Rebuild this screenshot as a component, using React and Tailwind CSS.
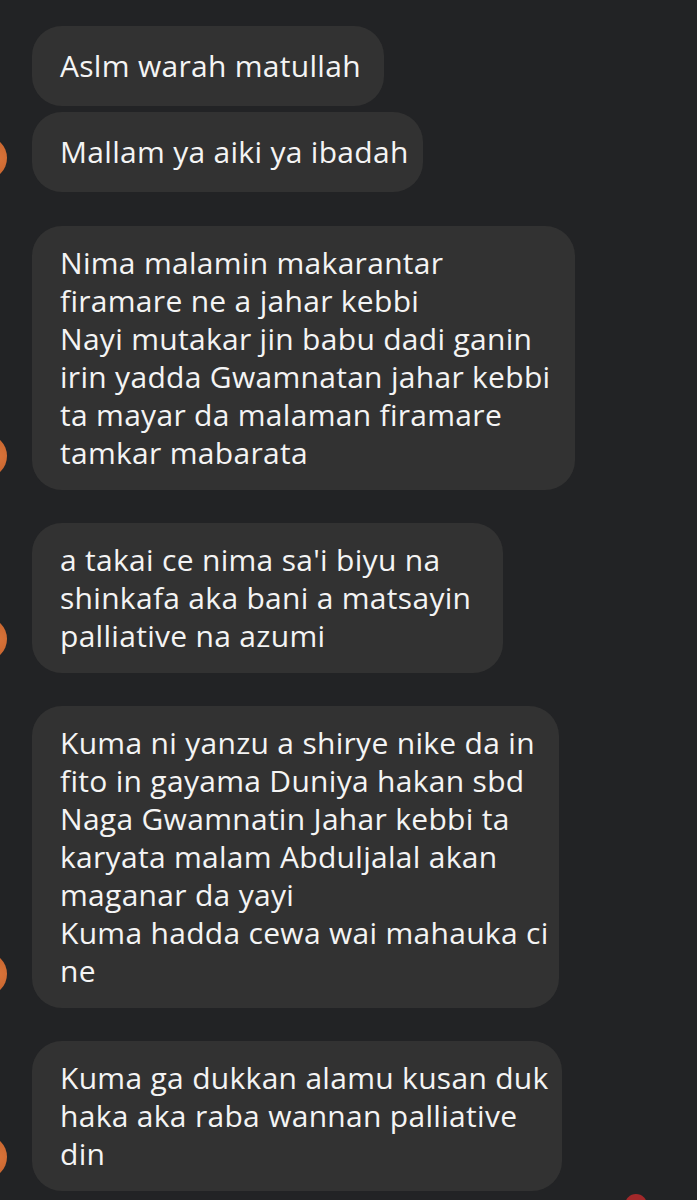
import React from "react";

const messages = [
  { lines: ["Aslm warah matullah"], w: "w-[352px]", single: true, avatar: false, mt: "mt-0" },
  { lines: ["Mallam ya aiki ya ibadah"], w: "w-[391px]", single: true, avatar: true, mt: "mt-[6px]" },
  {
    lines: [
      "Nima malamin makarantar",
      "firamare ne a jahar kebbi",
      "Nayi mutakar jin babu dadi ganin",
      "irin yadda Gwamnatan jahar kebbi",
      "ta mayar da malaman firamare",
      "tamkar mabarata",
    ],
    w: "w-[543px]",
    avatar: true,
    mt: "mt-[34px]",
  },
  {
    lines: ["a takai ce nima sa'i biyu na", "shinkafa aka bani a matsayin", "palliative na azumi"],
    w: "w-[471px]",
    avatar: true,
    mt: "mt-[33px]",
  },
  {
    lines: [
      "Kuma ni yanzu a shirye nike da in",
      "fito in gayama Duniya hakan sbd",
      "Naga Gwamnatin Jahar kebbi ta",
      "karyata malam Abduljalal akan",
      "maganar da yayi",
      "Kuma hadda cewa wai mahauka ci",
      "ne",
    ],
    w: "w-[527px]",
    avatar: true,
    mt: "mt-[33px]",
  },
  {
    lines: ["Kuma ga dukkan alamu kusan duk", "haka aka raba wannan palliative", "din"],
    w: "w-[530px]",
    avatar: true,
    mt: "mt-[33px]",
  },
];

function Avatar({ show }) {
  return (
    <div
      className={
        "shrink-0 w-[44px] h-[44px] ml-[-37px] mr-[25px] mb-[12px] rounded-full " +
        (show ? "bg-[radial-gradient(circle_at_80%_50%,#d9743a,#b4521f)]" : "bg-transparent")
      }
    />
  );
}

export default function App() {
  return (
    <div
      className="w-[697px] h-[1200px] overflow-hidden bg-[#222325] pt-[26px] text-[#f4f4f4]"
      style={{ fontFamily: '"Open Sans", "Noto Sans", sans-serif' }}
    >
      {messages.map((m, i) => (
        <div key={i} className={"flex items-end " + m.mt}>
          <Avatar show={m.avatar} />
          <div
            className={
              "bg-[#323232] rounded-[30px] pl-[28px] pr-[16px] text-[30px] tracking-[0.3px] leading-[38px] whitespace-nowrap " +
              m.w +
              (m.single ? " py-[21px]" : " py-[18px]")
            }
          >
            {m.lines.map((l, j) => (
              <div key={j}>{l}</div>
            ))}
          </div>
        </div>
      ))}
      <div className="flex justify-end pr-[50px] mt-[3px]">
        <div className="w-[22px] h-[22px] rounded-full bg-[linear-gradient(180deg,#a3282a_0%,#a3282a_25%,#e8e4dc_35%,#c9c2b5_100%)]" />
      </div>
    </div>
  );
}
